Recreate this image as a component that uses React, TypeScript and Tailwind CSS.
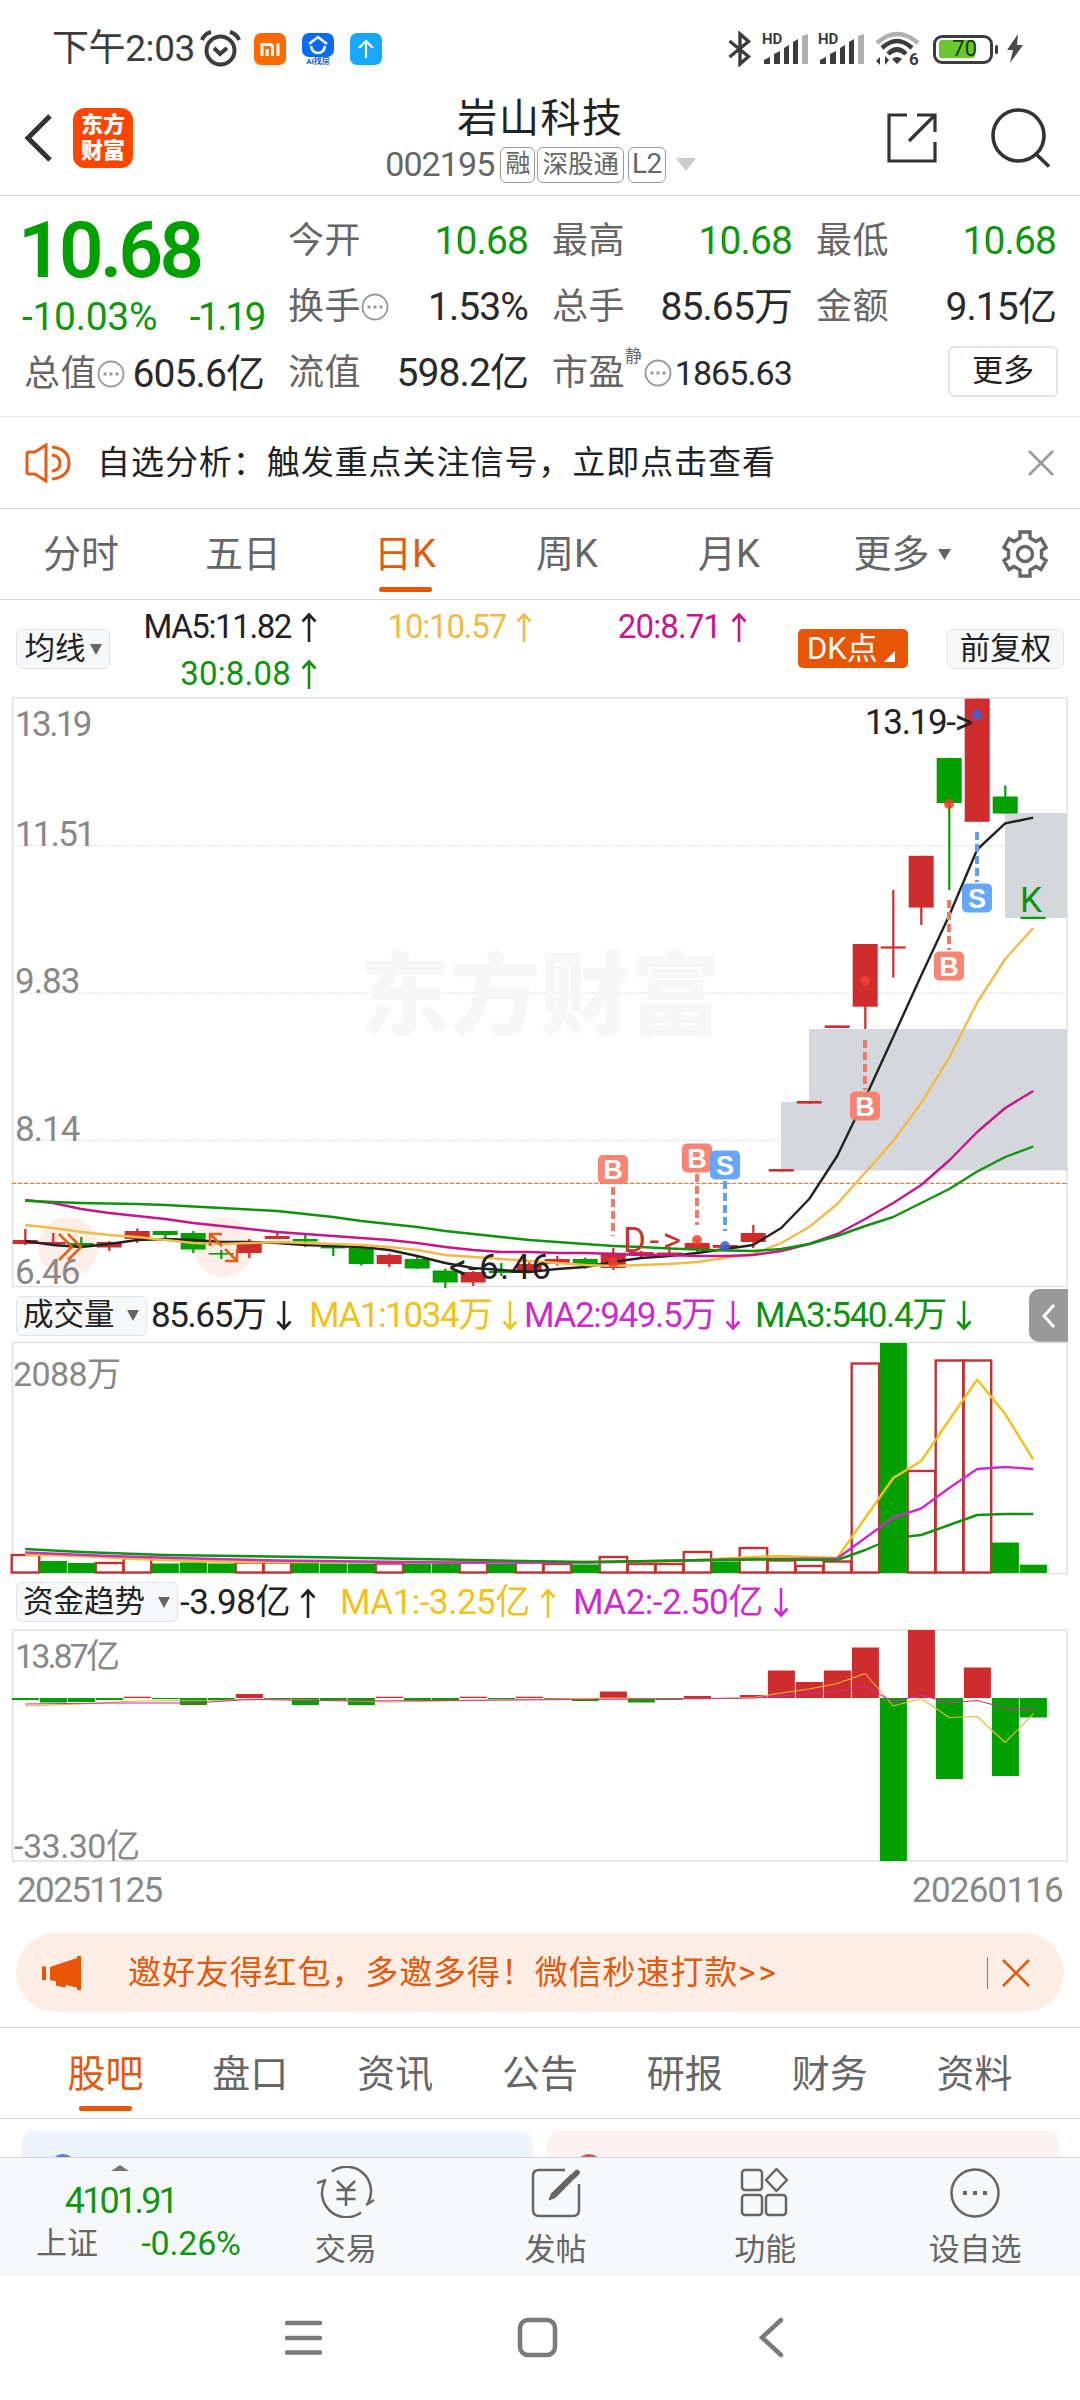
import type { ReactNode } from "react";

const RED = "#cf2d2d";
const GREEN = "#00a000";
const STEP = 28;
const cx = (i: number) => 25.2 + i * STEP;

// dir, body top, body bottom, wick top, wick bottom
type Candle = ["r" | "g", number, number, number, number];

const CANDLES: Candle[] = [
  ["r", 1240, 1244, 1229, 1245],
  ["r", 1242, 1244, 1233, 1245],
  ["g", 1243, 1246, 1237, 1247],
  ["r", 1242, 1247.5, 1241, 1251],
  ["r", 1231, 1239, 1228.5, 1243],
  ["g", 1231, 1235, 1231, 1239],
  ["g", 1233, 1249.5, 1231, 1253],
  ["g", 1253, 1254.6, 1250, 1259],
  ["r", 1243.5, 1253, 1239, 1258],
  ["r", 1236, 1239, 1231, 1239],
  ["g", 1239, 1241.5, 1235, 1247],
  ["g", 1246.6, 1248.4, 1246, 1256],
  ["g", 1248, 1264, 1247, 1265.5],
  ["r", 1255, 1264, 1253.5, 1267],
  ["g", 1259, 1268.5, 1257, 1269],
  ["g", 1270.5, 1282.5, 1268.5, 1288],
  ["r", 1272, 1282.5, 1271, 1286],
  ["g", 1271, 1273, 1263, 1276],
  ["r", 1264, 1272, 1262, 1273],
  ["r", 1259, 1264, 1256, 1265.5],
  ["g", 1259, 1264, 1257.5, 1268.5],
  ["r", 1252.7, 1268, 1248, 1270],
  ["r", 1252, 1255, 1251, 1258.5],
  ["r", 1252.5, 1255, 1247, 1256],
  ["r", 1243, 1250, 1241, 1252],
  ["r", 1245, 1247.8, 1244, 1248],
  ["r", 1233, 1242, 1225, 1248],
  ["r", 1169, 1171.6, 1169, 1171.6],
  ["r", 1101, 1103.6, 1101, 1103.6],
  ["r", 1025.4, 1028, 1025.4, 1028],
  ["r", 944, 1006.7, 944, 1029],
  ["r", 946.4, 948.6, 890, 977.6],
  ["r", 855.8, 907.6, 855.8, 925],
  ["g", 758, 803, 757.6, 890],
  ["r", 698.6, 821.8, 698.6, 821.8],
  ["g", 796.5, 813.5, 785.5, 813.5],
  ["g", 916.8, 919, 916.8, 919],
];

const MA5 = [
  1241, 1245, 1247, 1244, 1240, 1239, 1240, 1242, 1242, 1243, 1245, 1246, 1247, 1250, 1256, 1263, 1268, 1270, 1272,
  1269, 1267, 1262, 1258, 1256, 1253, 1249, 1245, 1228, 1199, 1156, 1098, 1037, 975.6, 915.5, 849.5, 823.4, 817.6,
];
const MA10 = [
  1225, 1228, 1232, 1235, 1237, 1240, 1243, 1244, 1243, 1242, 1243, 1244, 1245, 1247, 1250, 1255, 1257, 1259, 1261,
  1263, 1265, 1266, 1265, 1264, 1262, 1258, 1254, 1243, 1227, 1204, 1172.5, 1141, 1103, 1057.7, 1002.5, 959, 928,
];
const MA20 = [
  1200, 1203, 1209, 1213, 1216, 1219, 1223, 1226, 1229, 1232, 1234, 1236, 1238, 1240, 1243, 1247, 1250, 1252, 1252,
  1253, 1253, 1254, 1255, 1255, 1256, 1256, 1255, 1251, 1244, 1234, 1219, 1203, 1185, 1160.5, 1132, 1108, 1091,
];
const MA30 = [
  1200.7, 1202, 1203, 1203.5, 1204, 1205, 1206.5, 1208, 1209.5, 1211, 1214, 1217, 1221, 1224, 1227, 1231, 1234, 1237,
  1240, 1242, 1244, 1246, 1247, 1248.5, 1249.5, 1250.5, 1251, 1249, 1244, 1236, 1226, 1217, 1203, 1189, 1171.5, 1157,
  1146.5,
];

const VOLUME: ["r" | "g", number][] = [
  ["r", 1555], ["g", 1561], ["g", 1563], ["r", 1563], ["r", 1558], ["g", 1563.5], ["g", 1562.5], ["g", 1563.5],
  ["r", 1562.5], ["r", 1562.5], ["g", 1562.5], ["g", 1563.5], ["g", 1563.5], ["r", 1563.5], ["g", 1563.5],
  ["g", 1563.5], ["r", 1562.5], ["g", 1564], ["r", 1562.5], ["r", 1564], ["g", 1564.5], ["r", 1557], ["r", 1564],
  ["r", 1564], ["r", 1552], ["g", 1561.5], ["r", 1548], ["r", 1560.5], ["r", 1566], ["r", 1561.5], ["r", 1363.5],
  ["g", 1343], ["r", 1471], ["r", 1360.5], ["r", 1360.5], ["g", 1542.5], ["g", 1564.7],
];

const FLOW = [
  1700, 1702.5, 1702, 1700, 1696.7, 1699.2, 1705, 1700, 1694, 1700, 1705, 1700, 1705, 1696.7, 1700.5, 1700.5, 1696.7,
  1699.2, 1696.7, 1699.4, 1701, 1691.5, 1702.5, 1700, 1696, 1699, 1695, 1670.5, 1682, 1670.5, 1647.5, 1861, 1630, 1779,
  1667.5, 1776, 1717.5,
];

// sparse series: [index, y]
type Pts = [number, number][];
const VOL_Y: Pts = [[0, 1554.5], [2, 1556], [4, 1559], [6, 1561], [8, 1562], [22, 1562], [24, 1560], [26, 1557], [27, 1556], [29, 1558], [30, 1518], [31, 1478], [32, 1461], [33, 1420], [34, 1379.5], [35, 1414], [36, 1459.5]];
const VOL_M: Pts = [[0, 1552.5], [3, 1556], [6, 1558.5], [9, 1560.5], [15, 1562.5], [20, 1562.5], [26, 1559], [29, 1558.5], [30, 1538], [31, 1517.6], [32, 1508.5], [33, 1488], [34, 1469], [35, 1467], [36, 1469]];
const VOL_G: Pts = [[0, 1549], [2, 1552], [5, 1555], [10, 1557], [15, 1559.5], [20, 1562], [26, 1559.5], [29, 1560], [30, 1550], [31, 1538], [32, 1535], [33, 1525], [34, 1515], [35, 1514], [36, 1514]];
const FLOW_Y: Pts = [[0, 1706], [2, 1704], [4, 1701], [7, 1700.5], [8, 1699], [10, 1700], [13, 1702], [17, 1700], [21, 1698], [24, 1699], [26, 1697.5], [27, 1693], [28, 1689], [29, 1683.5], [30, 1673.5], [31, 1706], [32, 1698.5], [33, 1717.5], [34, 1716.5], [35, 1742.5], [36, 1714]];
const FLOW_M: Pts = [[0, 1704], [3, 1703], [6, 1703], [8, 1699.5], [12, 1701], [20, 1699.5], [26, 1698], [28, 1694], [29, 1691], [30, 1686], [31, 1702], [32, 1695], [33, 1703], [34, 1700.5], [35, 1708], [36, 1709.5]];

const line = (ys: number[]) => ys.map((y, i) => `${cx(i)},${y}`).join(" ");
const sparse = (pts: Pts) => pts.map(([i, y]) => `${cx(i)},${y}`).join(" ");

function Line({ points, color, width = 2.4 }: { points: string; color: string; width?: number }) {
  return <polyline points={points} fill="none" stroke={color} strokeWidth={width} strokeLinejoin="round" />;
}

function Marker({ x, y, kind, from, to, dot }: { x: number; y: number; kind: "B" | "S"; from: number; to: number; dot: number }) {
  const color = kind === "B" ? "#fb7d6c" : "#5fa2fb";
  return (
    <g>
      <line x1={x} x2={x} y1={from} y2={to} stroke={kind === "B" ? "#ec7b6c" : "#639fe9"} strokeWidth="4" strokeDasharray="8 4" />
      <circle cx={x} cy={dot} r="5" fill={kind === "B" ? "#f2402c" : "#3b64d8"} opacity="0.85" />
      <rect x={x - 15} y={y - 14.5} width="30" height="29" rx="5" fill={color} opacity="0.95" />
      <text x={x} y={y + 9.5} textAnchor="middle" fontSize="27" fontWeight="700" fill="#fff" className="font-['Liberation_Sans',sans-serif]">
        {kind}
      </text>
    </g>
  );
}

function PriceChart() {
  const labels: [string, number][] = [["13.19", 736], ["11.51", 846], ["9.83", 993], ["8.14", 1141], ["6.46", 1284]];
  return (
    <svg viewBox="0 697 1080 592" className="block h-[592px] w-[1080px] overflow-visible">
      {[845.8, 993, 1140.3].map((y) => (
        <line key={y} x1="13" x2="1067" y1={y} y2={y} stroke="#d2d2d2" strokeDasharray="1.5 1.5" />
      ))}
      <text x="540" y="1028" textAnchor="middle" fontSize="91" fontWeight="900" fill="#f7f7f7" textLength="362">
        东方财富
      </text>
      <rect x="12.5" y="698" width="1054.5" height="588.5" fill="none" stroke="#e0e0e0" strokeWidth="1.5" />
      <g fill="#d4d7dc">
        <path d="M781 1102H809V1029H1067V1170.500H781Z" />
        <rect x="1005" y="813" width="62" height="105" />
      </g>
      <line x1="12" x2="1067" y1="1183.300" y2="1183.300" stroke="#c98a55" strokeDasharray="4.500 1.500" strokeWidth="1.300" />
      <circle cx="68" cy="1247" r="30" fill="#fdeee7" />
      <circle cx="223.500" cy="1247" r="30" fill="#fdeee7" />
      {CANDLES.map(([d, top, bottom, hi, lo], i) => (
        <g key={i} fill={d === "r" ? RED : GREEN}>
          <rect x={cx(i) - 1} y={hi} width="2.2" height={lo - hi} />
          <rect x={cx(i) - 12.5} y={top} width="25" height={bottom - top} />
        </g>
      ))}
      <g fill="#888888" fontSize="35" letterSpacing="-0.9">
        {labels.map(([t, y]) => (
          <text key={t} x="15" y={y} letterSpacing={t === "13.19" ? -2.6 : t === "11.51" ? -1.8 : -0.9}>{t}</text>
        ))}
      </g>
      <Line points={line(MA5)} color="#222222" />
      <Line points={line(MA10)} color="#f2bb47" />
      <Line points={line(MA20)} color="#c6168b" />
      <Line points={line(MA30)} color="#0f930f" />
      <g fill="none" stroke="#e0601a" strokeWidth="2.6">
        <path d="M59 1234l13 13-13 13M68 1234l13 13-13 13" />
        <path d="M222 1246l-11-11M210 1246v-12h12M225 1249l11 11M237 1249v12h-12" />
      </g>
      <Marker x={613} y={1169.5} kind="B" from={1187} to={1236} dot={1263} />
      <Marker x={697} y={1158} kind="B" from={1174} to={1225} dot={1240} />
      <Marker x={725} y={1165} kind="S" from={1181} to={1231} dot={1246} />
      <Marker x={865} y={1106} kind="B" from={1040} to={1090} dot={981} />
      <Marker x={949} y={966} kind="B" from={900} to={950} dot={804} />
      <Marker x={977} y={898} kind="S" from={832} to={882} dot={714.5} />
      <g fontSize="35">
        <text x="865" y="734" fill="#222" textLength="108">{"13.19->"}</text>
        <text x="449" y="1279" fill="#222" textLength="102">{"<-6.46"}</text>
        <text x="623" y="1252" fill="#c83232" textLength="58">{"D->"}</text>
        <text x="1020" y="912" fill="#0f930f" textLength="23">K</text>
      </g>
    </svg>
  );
}

function VolumeChart() {
  return (
    <svg viewBox="0 1342 1080 233" className="block h-[233px] w-[1080px] overflow-visible">
      <rect x="12.5" y="1342.500" width="1054.500" height="231" fill="none" stroke="#e0e0e0" strokeWidth="1.500" />
      <text x="13" y="1386" fontSize="34" fill="#888888" textLength="108">2088万</text>
      {VOLUME.map(([d, top], i) =>
        d === "g" ? null : (
          <rect key={i} x={cx(i) - 13.5} y={top} width="27.5" height={1572.5 - top} fill="#fff" stroke="#c43333" strokeWidth="2.4" />
        ),
      )}
      {VOLUME.map(([d, top], i) =>
        d === "g" ? <rect key={i} x={cx(i) - 13.3} y={top} width="27" height={1573 - top} fill={GREEN} /> : null,
      )}
      <Line points={sparse(VOL_Y)} color="#efc31c" />
      <Line points={sparse(VOL_M)} color="#cd2ccd" />
      <Line points={sparse(VOL_G)} color="#0f930f" />
    </svg>
  );
}

function FlowChart() {
  return (
    <svg viewBox="0 1629 1080 234" className="block h-[234px] w-[1080px] overflow-visible">
      <rect x="12.5" y="1630" width="1054.5" height="231" fill="none" stroke="#e0e0e0" strokeWidth="1.5" />
      {FLOW.map((y, i) => (
        <rect key={i} x={cx(i) - 13.3} y={Math.min(y, 1698)} width="27" height={Math.abs(y - 1698)} fill={y < 1698 ? RED : GREEN} />
      ))}
      <Line points={sparse(FLOW_Y)} color="#e8b93c" width={1.1} />
      <Line points={sparse(FLOW_M)} color="#cd2c9d" width={1.1} />
      <text x="15" y="1668" fontSize="34" fill="#888888" textLength="105">13.87亿</text>
      <text x="14" y="1858" fontSize="34" fill="#888888" textLength="126">-33.30亿</text>
    </svg>
  );
}

function Info() {
  return (
    <svg viewBox="0 0 28 28" className="h-7 w-7 shrink-0">
      <circle cx="14" cy="14" r="12.500" fill="none" stroke="#999" strokeWidth="1.800" />
      <path d="M6.500 12.500h3v3h-3zM12.500 12.500h3v3h-3zM18.500 12.500h3v3h-3z" fill="#999" />
    </svg>
  );
}

function Down({ className }: { className: string }) {
  return (
    <svg viewBox="0 0 12 11" preserveAspectRatio="none" className={className}>
      <path d="M0 0h12L6 11z" fill="currentColor" />
    </svg>
  );
}

function Quote({ label, value, extra, up, green, small }: { label: string; value: string; extra?: boolean; up?: string; green?: boolean; small?: boolean }) {
  return (
    <div className="flex h-[66px] items-center">
      <span className="text-[36px] tracking-[0.5px] text-[#666]">{label}</span>
      {up && <span className="-mt-8 mr-0.5 text-[17px] text-[#666]">{up}</span>}
      {extra && <Info />}
      <span
        className={`ml-auto whitespace-nowrap ${green ? "text-[#0f970f]" : "text-[#2a2a2a]"} ${
          small ? "text-[34px] tracking-[-0.9px]" : "text-[39px] tracking-[-0.9px]"
        }`}
      >
        {value}
      </span>
    </div>
  );
}

function Signal() {
  return (
    <svg viewBox="0 0 46 32" className="h-8 w-[46px] overflow-visible">
      <text x="0" y="11" fontSize="15" fontWeight="700" fill="#3c3c3c">HD</text>
      <path d="M2 31v-4l6-3v7zM12 31V21l6-3v13zM22 31V15l5-3v19zM31 31V9l5-3v25z" fill="#3c3c3c" />
      <path d="M40 31V3l6-2v30z" fill="#b0b0b0" />
    </svg>
  );
}

function StatusBar() {
  return (
    <div className="flex h-[98px] items-center pl-[52px] text-[#3c3c3c]">
      <span className="w-[146px] whitespace-nowrap text-[37px] tracking-[-0.4px]">下午2:03</span>
      <svg viewBox="0 0 42 38" className="ml-0.5 h-[38px] w-[42px]" fill="none" stroke="#3c3c3c" strokeWidth="4">
        <circle cx="20.500" cy="20.500" r="14" />
        <path d="M14 18l6 6 7-6" />
        <path d="M2 10Q4 4 11 2M39 10Q37 4 30 2" />
      </svg>
      <svg viewBox="0 0 32 32" className="ml-3 h-8 w-8">
        <rect width="32" height="32" rx="7" fill="#ff6a00" />
        <path d="M8 23V11.500h7.500q3 0 3 3V23M13.200 16v7M24 10.500V23" fill="none" stroke="#fff" strokeWidth="3" />
      </svg>
      <svg viewBox="0 0 32 32" className="ml-4 h-8 w-8">
        <rect y="0" width="32" height="24" rx="7" fill="#0a6cf1" />
        <path d="M7 11l9-7 9 7M9 13q1 7 7 7t7-7" fill="none" stroke="#fff" strokeWidth="2.500" />
        <text x="16" y="31" textAnchor="middle" fontSize="8" fontWeight="700" fill="#0a5fd6">AI找房</text>
      </svg>
      <svg viewBox="0 0 32 32" className="ml-4 h-8 w-8">
        <rect width="32" height="32" rx="7" fill="#18a8fb" />
        <path d="M16 25V8M9 15l7-7 7 7" fill="none" stroke="#fff" strokeWidth="2.200" />
      </svg>
      <svg viewBox="0 0 24 36" className="ml-[346px] h-9 w-6" fill="none" stroke="#3c3c3c" strokeWidth="3.400">
        <path d="M1.500 10l19 15.500L12 33V3l8.500 7.500L1.500 26" />
      </svg>
      <div className="ml-[10px] flex gap-[10px]">
        <Signal />
        <Signal />
      </div>
      <svg viewBox="0 0 44 34" className="ml-3 h-[34px] w-11 overflow-visible" fill="none">
        <path d="M1 11Q21-7 42 11" stroke="#b0b0b0" strokeWidth="4.500" />
        <path d="M6 16Q21 2 36 16M12 22Q21 13 30 22" stroke="#3c3c3c" strokeWidth="4.500" />
        <path d="M16 27q5-4 10 0l-5 5zM4 25v8l-4-4zM9 33v-9l4 4z" fill="#3c3c3c" />
        <text x="33" y="33" fontSize="17" fontWeight="700" fill="#3c3c3c">6</text>
      </svg>
      <div className="ml-[13px] flex h-[29px] w-[60px] items-center rounded-[9px] border-[3px] border-[#3c3c3c] p-[3px]">
        <div className="flex h-[18px] w-9 items-center justify-end rounded-[3px] bg-[#67c92d]">
          <span className="-mr-0.5 text-[22px] leading-none text-[#1c3a0c]">70</span>
        </div>
      </div>
      <span className="ml-0.5 h-[9px] w-[3px] rounded bg-[#3c3c3c]" />
      <svg viewBox="0 0 18 30" className="ml-2 h-[30px] w-[18px]">
        <path d="M12 0L1 16h6L4 29 17 11h-6z" fill="#4a4a4a" />
      </svg>
    </div>
  );
}

function Header() {
  return (
    <header className="flex h-[98px] items-center border-b-[1.5px] border-[#d6d6d6] pl-6 pr-[29px]">
      <svg viewBox="0 0 28 48" className="-mt-[18px] h-12 w-7" fill="none" stroke="#333" strokeWidth="5">
        <path d="M26 2L4 24l22 22" />
      </svg>
      <div className="-mt-[18px] ml-[21px] flex h-[60px] w-[60px] flex-col items-center justify-center rounded-[12px] bg-[#ff4500] text-[22px] font-black leading-[26px] text-white">
        <span>东方</span>
        <span>财富</span>
      </div>
      <div className="flex flex-1 flex-col items-center pl-[61px]">
        <h1 className="-mt-4 text-[40px] leading-[52px] tracking-[1.6px] text-[#222]">岩山科技</h1>
        <div className="flex h-10 items-center text-[#666]">
          <span className="text-[34px] tracking-[-0.9px]">002195</span>
          <span className="ml-1.5 h-9 rounded-[6px] border-[1.5px] border-[#999] px-1 text-[25px] leading-8">融</span>
          <span className="ml-0.5 h-9 rounded-[6px] border-[1.5px] border-[#999] px-1 text-[25.5px] leading-8">深股通</span>
          <span className="ml-1 h-9 rounded-[6px] border-[1.5px] border-[#999] px-[3px] text-[28px] leading-8 tracking-[-0.5px]">L2</span>
          <Down className="ml-[10px] h-[13px] w-5 text-[#ccc]" />
        </div>
      </div>
      <svg viewBox="0 0 50 50" className="-mt-[18px] h-[50px] w-[50px]" fill="none" stroke="#333" strokeWidth="3.200">
        <path d="M20 2H2v46h46V29M30 2h18v17M47 3L22 28" />
      </svg>
      <svg viewBox="0 0 60 60" className="-mt-[18px] ml-[54px] h-[60px] w-[60px]" fill="none" stroke="#333" strokeWidth="3.600">
        <circle cx="27.500" cy="27.500" r="25.500" />
        <path d="M45 46l13 12.500" />
      </svg>
    </header>
  );
}

function Quotes() {
  return (
    <section className="grid h-[221px] grid-cols-4 gap-x-6 border-b-[1.5px] border-[#e9e9e9] px-6 pt-3">
      <div>
        <div className="-ml-1.5 flex h-[86px] items-center text-[78px] font-semibold leading-none tracking-[-3.6px] text-[#00a000]">10.68</div>
        <div className="-ml-0.5 flex h-[47px] items-center justify-between text-[39px] text-[#0f970f]">
          <span className="tracking-[-0.3px]">-10.03%</span>
          <span className="tracking-[-2.5px]">-1.19</span>
        </div>
        <Quote label="总值" value="605.6亿" extra />
      </div>
      <div>
        <Quote label="今开" value="10.68" green />
        <Quote label="换手" value="1.53%" extra />
        <Quote label="流值" value="598.2亿" />
      </div>
      <div>
        <Quote label="最高" value="10.68" green />
        <Quote label="总手" value="85.65万" />
        <Quote label="市盈" value="1865.63" up="静" extra small />
      </div>
      <div>
        <Quote label="最低" value="10.68" green />
        <Quote label="金额" value="9.15亿" />
        <div className="-mr-0.5 ml-auto mt-1.5 flex h-[51px] w-[110px] items-center justify-center rounded-[6px] border-2 border-[#e4e4e4] text-[31px] text-[#222]">更多</div>
      </div>
    </section>
  );
}

function Notice() {
  return (
    <div className="flex h-[92px] items-center border-b-[1.5px] border-[#d6d6d6] pl-[25px] pr-[26px]">
      <svg viewBox="0 0 46 40" className="h-10 w-[46px]" fill="none" stroke="#e0601a" strokeWidth="3">
        <path d="M2 11q0-2 2-2h6L21 2v36L10 31H4q-2 0-2-2z" />
        <path d="M27 4q17 2 17 16T27 36M27 12q8 1 8 8t-8 8" />
      </svg>
      <span className="ml-[26px] text-[33px] tracking-[0.95px] text-[#222]">自选分析：触发重点关注信号，立即点击查看</span>
      <svg viewBox="0 0 26 26" className="ml-auto h-[26px] w-[26px]" fill="none" stroke="#999" strokeWidth="2.600">
        <path d="M1 1l24 24M25 1L1 25" />
      </svg>
    </div>
  );
}

function Tabs() {
  return (
    <nav className="flex h-[91px] items-center border-b-[1.5px] border-[#d6d6d6] text-[38px] text-[#666]">
      {["分时", "五日", "日K", "周K", "月K"].map((t) => (
        <div key={t} className={`flex h-full w-[162px] flex-col items-center pt-[17px] ${t === "日K" ? "text-[#e05a10]" : ""}`}>
          <span className="h-[61px] leading-[57px]">{t}</span>
          {t === "日K" && <span className="h-[5px] w-[53px] rounded bg-[#e85504]" />}
        </div>
      ))}
      <div className="flex w-[184px] items-center justify-center">
        更多
        <Down className="ml-2 h-[11px] w-[13px]" />
      </div>
      <svg viewBox="0 0 46 48" className="ml-2 h-12 w-[46px]" fill="none" stroke="#666" strokeWidth="3.400">
        <path d="M18 2h10v6l6 3.500 5-3 5 9-4.500 3v7l4.500 3-5 9-5-3-6 3.500v6H18v-6l-6-3.500-5 3-5-9 4.500-3v-7L2 17.500l5-9 5 3L18 8z" />
        <circle cx="23" cy="24" r="7.500" />
      </svg>
    </nav>
  );
}

function Pill({ children, className }: { children: ReactNode; className: string }) {
  return (
    <div className={`flex h-10 shrink-0 items-center whitespace-nowrap rounded-[6px] border-[1.5px] border-[#e2e4e7] bg-[#f7f8fa] text-[30.5px] leading-none text-[#222] ${className}`}>
      {children}
    </div>
  );
}

function MaRow() {
  return (
    <div className="flex h-[97px] pt-[29px] text-[33px] leading-[46px]">
      <Pill className="ml-4 w-[94px] justify-center">
        均线
        <Down className="ml-1 h-[11px] w-3 text-[#666]" />
      </Pill>
      <div className="-mt-[25px] grid w-[638px] grid-cols-[207px_215px_215px] text-right">
        <span className="tracking-[-1.4px] text-[#222]">MA5:11.82<Arrow up /></span>
        <span className="tracking-[-1.2px] text-[#f2bb47]">10:10.57<Arrow up /></span>
        <span className="tracking-[-0.9px] text-[#c6168b]">20:8.71<Arrow up /></span>
        <span className="text-[#0f930f] tracking-[0.2px]">30:8.08<Arrow up /></span>
      </div>
      <div className="ml-[50px] flex h-[39px] w-[110px] items-center rounded-[5px] bg-[#e85504] pl-[9px] text-[31px] leading-none text-white">
        DK点
        <svg viewBox="0 0 11 11" className="ml-1.5 mt-4 h-[11px] w-[11px]">
          <path d="M11 0v11H0z" fill="#fff" />
        </svg>
      </div>
      <Pill className="ml-[39px] w-[117px] justify-center">前复权</Pill>
    </div>
  );
}

function Arrow({ up }: { up?: boolean }) {
  return (
    <svg viewBox="0 0 16 30" className="ml-2.5 inline-block h-[30px] w-4 align-[-4px]" fill="none" stroke="currentColor" strokeWidth="2.600">
      {up ? <path d="M8 30V2M1.500 9.500L8 2.500l6.500 7" /> : <path d="M8 0v28M1.500 20.500L8 27.500l6.500-7" />}
    </svg>
  );
}

function VolumeRow() {
  return (
    <div className="flex h-[53px] items-center whitespace-nowrap text-[35px] tracking-[-1.4px]">
      <Pill className="ml-4 w-[131px] justify-between pl-1.5 pr-[7px] tracking-normal">
        成交量
        <Down className="h-[11px] w-3 text-[#666]" />
      </Pill>
      <span className="w-[158px] pl-1 pt-0.5 text-[#222]">85.65万<Arrow /></span>
      <span className="w-[215px] pl-1 pt-0.5 text-[#efc31c]">MA1:1034万<Arrow /></span>
      <span className="w-[231px] pl-1 pt-0.5 text-[#cd2ccd]">MA2:949.5万<Arrow /></span>
      <span className="pl-1 pt-0.5 text-[#0f930f]">MA3:540.4万<Arrow /></span>
      <div className="ml-auto mr-3 flex h-[53px] w-[39px] items-center justify-center rounded-l-[10px] bg-[#999]">
        <svg viewBox="0 0 14 24" className="h-6 w-3.5" fill="none" stroke="#fff" strokeWidth="3">
          <path d="M12 1L2 12l10 11" />
        </svg>
      </div>
    </div>
  );
}

function FlowRow() {
  return (
    <div className="flex h-[54px] items-center whitespace-nowrap text-[35px] tracking-[-0.5px]">
      <Pill className="ml-4 w-[162px] justify-between pl-1.5 pr-[7px] tracking-normal">
        资金趋势
        <Down className="h-[11px] w-3 text-[#666]" />
      </Pill>
      <span className="w-[158px] pl-0.5 pt-0.5 text-[#222]">-3.98亿<Arrow up /></span>
      <span className="w-[235px] pl-1 pt-0.5 text-[#efc31c]">MA1:-3.25亿<Arrow up /></span>
      <span className="pl-0.5 pt-0.5 text-[#cd2ccd]">MA2:-2.50亿<Arrow /></span>
    </div>
  );
}

function Banner() {
  return (
    <div className="mx-4 flex h-[79px] items-center rounded-full bg-[#fceee4] pl-[26px] pr-[34px] text-[#e05a10]">
      <svg viewBox="0 0 40 34" className="h-[34px] w-10" fill="#e85504">
        <path d="M0 10.500h4V24H0zM8 11L35 2V0h4v34h-4v-2.500L24 29l-1 2.500-9-2V25.500L8 24z" />
      </svg>
      <span className="ml-[46px] text-[33px] tracking-[0.9px]">
        邀好友得红包，多邀多得！微信秒速打款<span className="tracking-[3px]">&gt;&gt;</span>
      </span>
      <span className="ml-auto h-8 w-[1.5px] bg-[#e05a10]" />
      <svg viewBox="0 0 28 28" className="ml-[14px] h-7 w-7" fill="none" stroke="#e05a10" strokeWidth="2.600">
        <path d="M1 1l26 26M27 1L1 27" />
      </svg>
    </div>
  );
}

function BottomTabs() {
  return (
    <nav className="mt-[15px] flex h-[92px] border-y-[1.5px] border-[#d6d6da] px-[33px] text-[38px] text-[#666]">
      {["股吧", "盘口", "资讯", "公告", "研报", "财务", "资料"].map((t, i) => (
        <div key={t} className={`flex flex-1 flex-col items-center pt-[17px] ${i === 0 ? "text-[#e05a10]" : ""}`}>
          <span className="h-[61px] leading-[59px]">{t}</span>
          {i === 0 && <span className="h-[5px] w-[53px] rounded bg-[#e85504]" />}
        </div>
      ))}
    </nav>
  );
}

function Tool({ label, children }: { label: string; children: ReactNode }) {
  return (
    <div className="flex w-[210px] flex-col items-center pt-2">
      <svg viewBox="0 0 58 52" className="h-[52px] w-[58px]" fill="none" stroke="#666" strokeWidth="2.500">
        {children}
      </svg>
      <span className="mt-2 text-[31px] leading-[48px]">{label}</span>
    </div>
  );
}

function ActionBar() {
  return (
    <footer className="flex h-[119px] border-t-[1.5px] border-[#d3d6da] bg-[#f7f8fa] text-[#666]">
      <div className="flex w-[241px] flex-col items-center pt-[7px]">
        <svg viewBox="0 0 18 6" className="h-1.5 w-[18px]">
          <path d="M9 0l9 6H0z" fill="#777" />
        </svg>
        <span className="mt-2 text-[36px] leading-[44px] tracking-[-2.8px] text-[#0f970f]">4101.91</span>
        <div className="flex w-full items-center justify-between pl-[36px] text-[31px] leading-[41px]">
          <span>上证</span>
          <span className="text-[34px] tracking-[-0.2px] text-[#0f970f]">-0.26%</span>
        </div>
      </div>
      <Tool label="交易">
        <path d="M15 5.500A24.500 24.500 0 0 1 51 37M44 46.500A24.500 24.500 0 0 1 8 15M0 17l9-3M57 34l-8 5" />
        <path d="M20 15l9 9 9-9M19.500 24h19M19.500 33h19M29 23v17" />
      </Tool>
      <Tool label="发帖">
        <path d="M38 4H12q-6 0-6 6v34q0 6 6 6h34q6 0 6-6V18" />
        <path d="M22 34l2.500-6.500L44 8.500l3.500 3.500L28.500 31.500z" fill="#666" strokeWidth="1" />
        <path d="M47 9.500L50 6.500" strokeWidth="5.500" strokeLinecap="round" />
      </Tool>
      <Tool label="功能">
        <rect x="6" y="4" width="20" height="20" rx="3" />
        <rect x="6" y="29" width="20" height="20" rx="3" />
        <rect x="30" y="29" width="20" height="20" rx="3" />
        <path d="M40.500 3L51 14 40.500 25 30 14z" strokeLinejoin="round" />
      </Tool>
      <Tool label="设自选">
        <circle cx="29" cy="27" r="23.500" />
        <path d="M17 27h4M27 27h4M37 27h4" strokeWidth="4" />
      </Tool>
    </footer>
  );
}

export default function App() {
  return (
    <div className="flex h-[2400px] w-[1080px] flex-col overflow-hidden bg-white font-['Roboto','Noto_Sans_CJK_SC',sans-serif]">
      <StatusBar />
      <Header />
      <Quotes />
      <Notice />
      <Tabs />
      <MaRow />
      <PriceChart />
      <VolumeRow />
      <VolumeChart />
      <FlowRow />
      <FlowChart />
      <div className="flex h-[70px] items-center justify-between pb-3.5 pl-[17px] pr-[17px] text-[35px] text-[#888]">
        <span className="tracking-[-1.6px]">20251125</span>
        <span className="tracking-[-0.8px]">20260116</span>
      </div>
      <Banner />
      <BottomTabs />
      <div className="flex h-[38px] gap-3.5 overflow-hidden px-[21px] pt-3">
        <div className="h-20 flex-1 rounded-[14px] bg-[#edf4fd] pl-[29px] pt-[23px]">
          <div className="h-[26px] w-[26px] rounded-full bg-[#5b82d4]" />
        </div>
        <div className="h-20 flex-1 rounded-[14px] bg-[#fdf2f2] pl-[29px] pt-[23px]">
          <div className="h-[26px] w-[26px] rounded-full bg-[#c95c58]" />
        </div>
      </div>
      <ActionBar />
      <div className="flex flex-1 items-start pl-[285px] pt-[41px]">
        <svg viewBox="0 0 500 42" className="h-[42px] w-[500px]" fill="none" stroke="#7a7a7a" strokeWidth="4.500" strokeLinecap="round">
          <path d="M2 6h33M2 21h33M2 35.500h33" />
          <rect x="235" y="3" width="35" height="35" rx="8" />
          <path d="M496 3L477 20.500 496 38" />
        </svg>
      </div>
    </div>
  );
}
